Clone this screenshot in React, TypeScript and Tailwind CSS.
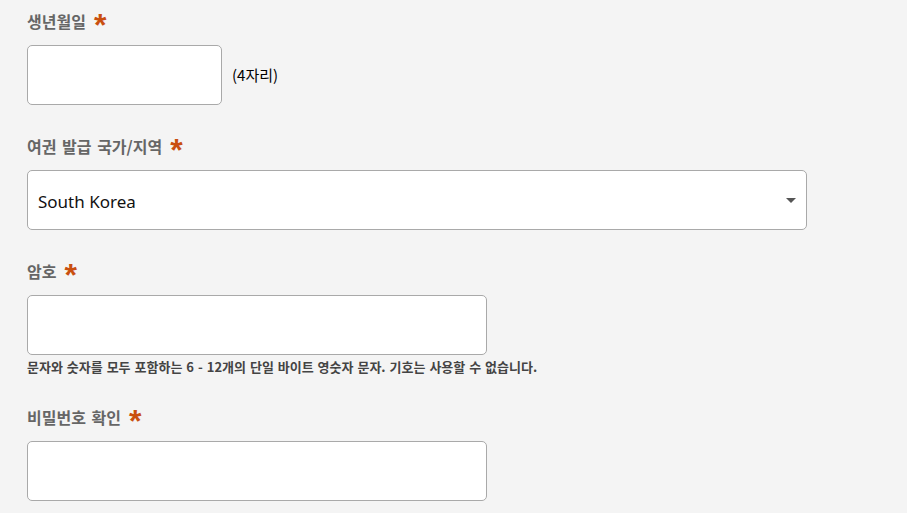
import React from 'react'

const kr = { fontFamily: '"Noto Sans CJK KR", "Noto Sans", sans-serif' }

function Label({ text }: { text: string }) {
  return (
    <div className="flex items-center h-[20px] mb-[14px]" style={kr}>
      <span className="text-[16px] leading-[20px] font-bold text-[#666666] [word-spacing:2px]">{text}</span>
      <span
        className="ml-[8px] text-[32px] leading-[20px] font-bold text-[#c94f0f] mt-[8px]"
        style={{ fontFamily: '"Liberation Sans", sans-serif' }}
      >
        *
      </span>
    </div>
  )
}

export default function App() {
  return (
    <div className="min-h-[513px] w-full bg-[#f4f4f4] pl-[27px] pt-[11px]" style={kr}>
      {/* 생년월일 */}
      <div className="mb-[31px]">
        <Label text="생년월일" />
        <div className="flex items-center">
          <input className="h-[60px] w-[195px] rounded-[5px] border border-[#a9a9a9] bg-white outline-none" />
          <span className="ml-[10px] text-[15px] text-black">(4자리)</span>
        </div>
      </div>

      {/* 여권 발급 국가/지역 */}
      <div className="mb-[31px]">
        <Label text="여권 발급 국가/지역" />
        <div className="flex h-[60px] w-[780px] items-center justify-between rounded-[5px] border border-[#a9a9a9] bg-white pl-[10px] pr-[10px]">
          <span className="pt-[3px] text-[17px] text-[#111111]" style={{ fontFamily: '"Noto Sans", sans-serif' }}>
            South Korea
          </span>
          <svg width="10" height="5" viewBox="0 0 10 5" className="mt-[1px]">
            <path d="M0 0h10L5 5z" fill="#555555" />
          </svg>
        </div>
      </div>

      {/* 암호 */}
      <div className="mb-[32px]">
        <Label text="암호" />
        <input
          type="password"
          className="block h-[60px] w-[460px] rounded-[5px] border border-[#a9a9a9] bg-white outline-none"
        />
        <p className="mt-[4px] text-[13px] leading-[16px] font-bold text-[#444444] [word-spacing:1px]">
          문자와 숫자를 모두 포함하는 6 - 12개의 단일 바이트 영숫자 문자. 기호는 사용할 수 없습니다.
        </p>
      </div>

      {/* 비밀번호 확인 */}
      <div>
        <Label text="비밀번호 확인" />
        <input
          type="password"
          className="block h-[60px] w-[460px] rounded-[5px] border border-[#a9a9a9] bg-white outline-none"
        />
      </div>
    </div>
  )
}
